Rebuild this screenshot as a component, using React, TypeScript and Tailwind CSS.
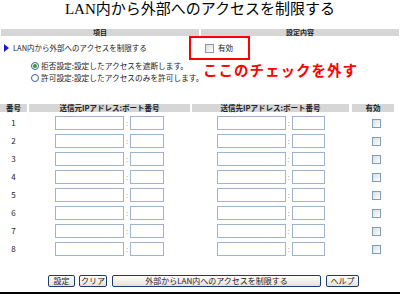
import React from "react";

function Checkbox() {
  return (
    <div className="w-[9px] h-[9px] border border-[#7f9db9] bg-linear-to-br from-[#dcdcd7] to-white shrink-0" />
  );
}

function Radio({ checked }: { checked?: boolean }) {
  return (
    <div className="w-[8px] h-[8px] rounded-full border border-[#3c5f9a] bg-white flex items-center justify-center shrink-0">
      {checked && <div className="w-[4px] h-[4px] rounded-full bg-[#2f9a2f]" />}
    </div>
  );
}

function Field({ w }: { w: string }) {
  return <div className={`${w} h-[14px] border border-[#9fb3cf] bg-white shrink-0`} />;
}

export default function App() {
  const rows = [1, 2, 3, 4, 5, 6, 7, 8];
  return (
    <div className="w-[400px] h-[296px] bg-white overflow-hidden font-['Noto_Sans_CJK_JP',sans-serif] text-[#222]">
      <div className="h-[29px] pt-[1px] flex justify-center">
        <div className="text-[15px] leading-[16px] text-black font-['Liberation_Serif','Noto_Sans_CJK_JP',serif]">
          LAN内から外部へのアクセスを制限する
        </div>
      </div>
      <div className="h-[7px] flex gap-[2px] px-[1px]">
        <div className="w-[198px] bg-[#d6d6d6] flex items-center justify-center text-[7px] leading-none font-bold">項目</div>
        <div className="flex-1 bg-[#d6d6d6] flex items-center justify-center text-[7px] leading-none font-bold">設定内容</div>
      </div>
      <div className="h-[68px] grid grid-cols-[189px_1fr]">
        <div className="flex flex-col whitespace-nowrap">
          <div className="h-[24px] flex items-center pl-[4px]">
            <svg width="5" height="8" viewBox="0 0 5 8" className="shrink-0">
              <polygon points="0,0 5,4 0,8" fill="#1a1ad0" />
            </svg>
            <span className="ml-[4px] text-[7.5px] leading-none">LAN内から外部へのアクセスを制限する</span>
          </div>
          <div className="h-[12px] flex items-center pl-[31px] gap-[2px]">
            <Radio checked />
            <span className="text-[7.7px] leading-none">拒否設定:設定したアクセスを遮断します。</span>
          </div>
          <div className="h-[12px] flex items-center pl-[31px] gap-[2px]">
            <Radio />
            <span className="text-[7.7px] leading-none">許可設定:設定したアクセスのみを許可します。</span>
          </div>
        </div>
        <div className="flex flex-col">
          <div className="w-[61px] h-[24px] border-2 border-[#ff0000] flex items-center pl-[14px] gap-[4px]">
            <Checkbox />
            <span className="text-[7.5px] leading-none">有効</span>
          </div>
          <div className="mt-[2px] ml-[14px] text-[14.5px] tracking-[1px] leading-[15px] font-bold text-[#ff0000] whitespace-nowrap">
            ここのチェックを外す
          </div>
        </div>
      </div>
      <div className="h-[8px] flex text-[7.5px] leading-none font-bold whitespace-nowrap">
        <div className="w-[27px] bg-[#d6d6d6] flex items-center justify-center">番号</div>
        <div className="w-[161px] ml-[2px] bg-[#d6d6d6] flex items-center justify-center">送信元IPアドレス:ポート番号</div>
        <div className="w-[157px] ml-[2px] bg-[#d6d6d6] flex items-center justify-center">送信先IPアドレス:ポート番号</div>
        <div className="w-[42px] ml-[3px] bg-[#d6d6d6] flex items-center justify-center">有効</div>
      </div>
      <div className="mt-[2px] flex flex-col">
        {rows.map((n) => (
          <div key={n} className="h-[18px] flex items-center">
            <div className="w-[27px] text-center text-[8px] leading-none">{n}</div>
            <div className="w-[161px] ml-[2px] flex items-center justify-center">
              <Field w="w-[69px]" />
              <span className="w-[6px] text-center text-[8px] leading-none text-[#aaa]">:</span>
              <Field w="w-[34px]" />
            </div>
            <div className="w-[157px] ml-[2px] flex items-center justify-center">
              <Field w="w-[69px]" />
              <span className="w-[6px] text-center text-[8px] leading-none text-[#aaa]">:</span>
              <Field w="w-[33px]" />
            </div>
            <div className="w-[42px] ml-[3px] flex items-center pl-[20px]">
              <Checkbox />
            </div>
          </div>
        ))}
      </div>
      <div className="mt-[17px] h-[12px] flex pl-[48px] text-[8px] leading-none whitespace-nowrap">
        <button className="w-[27px] h-[12px] border border-[#1d3c6e] rounded-[2px] bg-linear-to-b from-white to-[#e4e2d8] flex items-center justify-center">設定</button>
        <button className="ml-[4px] w-[28px] h-[12px] border border-[#1d3c6e] rounded-[2px] bg-linear-to-b from-white to-[#e4e2d8] flex items-center justify-center">クリア</button>
        <button className="ml-[5px] w-[209px] h-[12px] border border-[#1d3c6e] rounded-[2px] bg-linear-to-b from-white to-[#e4e2d8] flex items-center justify-center">外部からLAN内へのアクセスを制限する</button>
        <button className="ml-[5px] w-[33px] h-[12px] border border-[#1d3c6e] rounded-[2px] bg-linear-to-b from-white to-[#e4e2d8] flex items-center justify-center">ヘルプ</button>
      </div>
      <div className="mt-[5px] h-[2px] bg-black" />
    </div>
  );
}
